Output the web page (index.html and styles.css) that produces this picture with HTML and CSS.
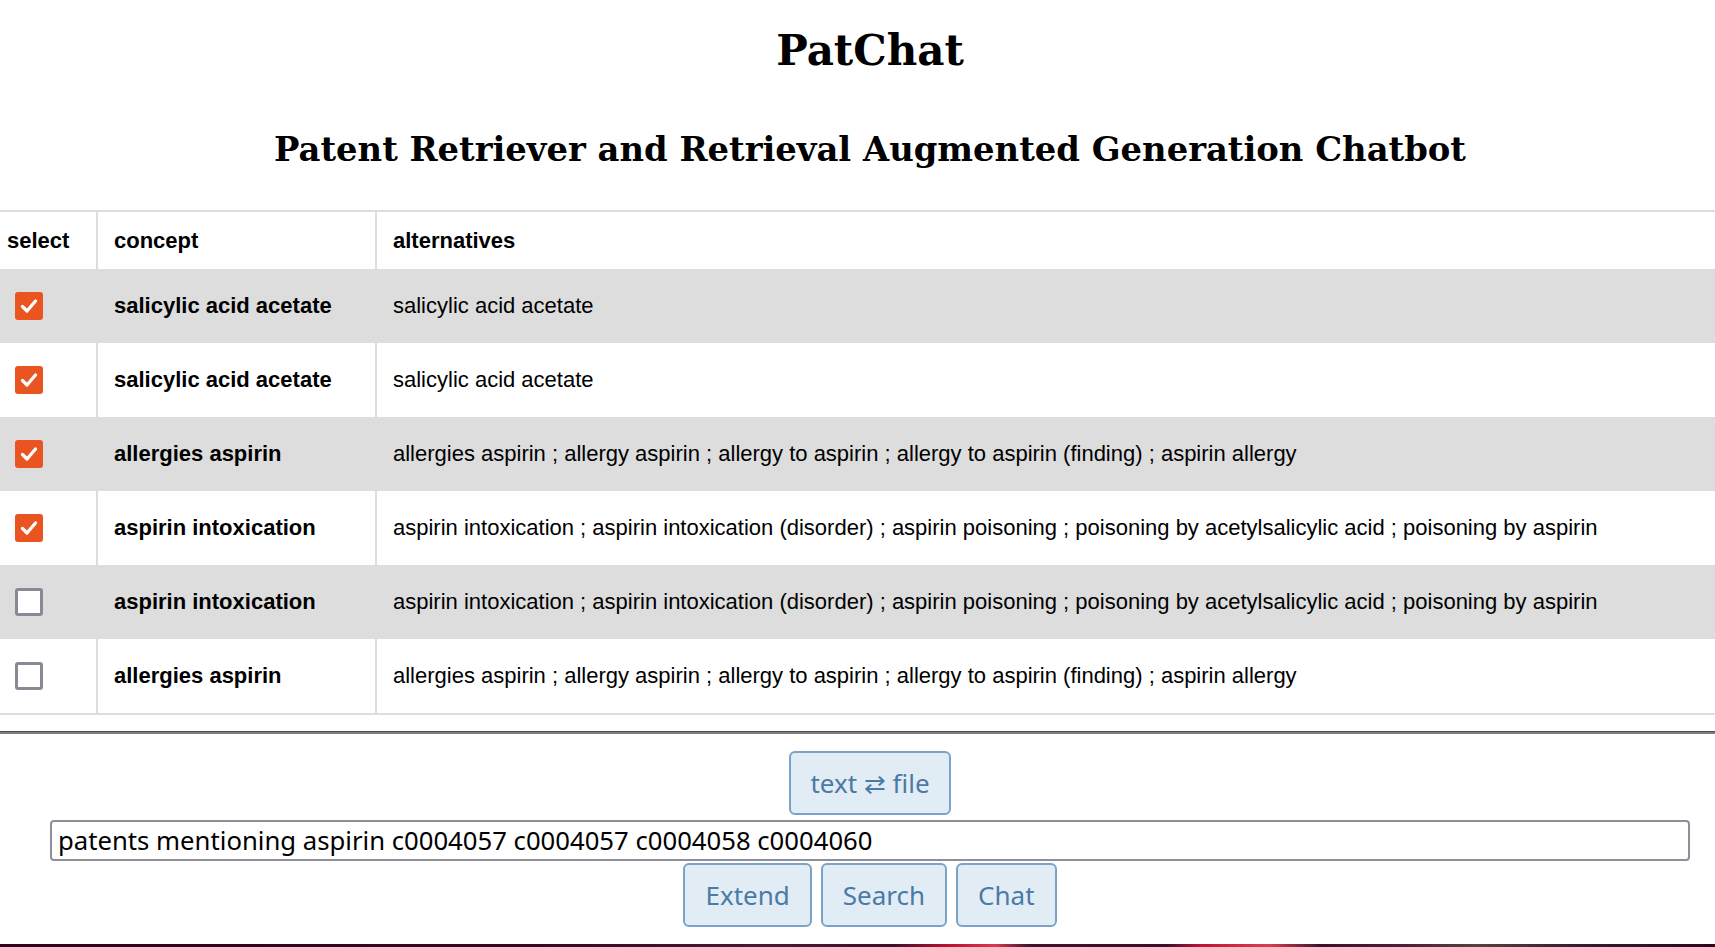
FILE: index.html
```html
<!DOCTYPE html>
<html lang="en">
<head>
<meta charset="utf-8">
<title>PatChat</title>
<link rel="stylesheet" href="styles.css">
</head>
<body>
<div class="page">
  <header class="masthead">
    <h1 class="title">PatChat</h1>
    <h2 class="subtitle">Patent Retriever and Retrieval Augmented Generation Chatbot</h2>
  </header>

  <table class="concepts">
    <colgroup>
      <col class="c-select">
      <col class="c-concept">
      <col class="c-alt">
    </colgroup>
    <thead>
      <tr><th class="sel">select</th><th>concept</th><th>alternatives</th></tr>
    </thead>
    <tbody>
      <tr class="odd">
        <td class="sel"><span class="box on"><svg viewBox="0 0 28 28" width="28" height="28"><path d="M7.5 14.5 L12 19 L20.5 9" fill="none" stroke="#fff" stroke-width="3.3" stroke-linecap="round" stroke-linejoin="round"/></svg></span></td>
        <td class="concept">salicylic acid acetate</td>
        <td>salicylic acid acetate</td>
      </tr>
      <tr>
        <td class="sel"><span class="box on"><svg viewBox="0 0 28 28" width="28" height="28"><path d="M7.5 14.5 L12 19 L20.5 9" fill="none" stroke="#fff" stroke-width="3.3" stroke-linecap="round" stroke-linejoin="round"/></svg></span></td>
        <td class="concept">salicylic acid acetate</td>
        <td>salicylic acid acetate</td>
      </tr>
      <tr class="odd">
        <td class="sel"><span class="box on"><svg viewBox="0 0 28 28" width="28" height="28"><path d="M7.5 14.5 L12 19 L20.5 9" fill="none" stroke="#fff" stroke-width="3.3" stroke-linecap="round" stroke-linejoin="round"/></svg></span></td>
        <td class="concept">allergies aspirin</td>
        <td>allergies aspirin ; allergy aspirin ; allergy to aspirin ; allergy to aspirin (finding) ; aspirin allergy</td>
      </tr>
      <tr>
        <td class="sel"><span class="box on"><svg viewBox="0 0 28 28" width="28" height="28"><path d="M7.5 14.5 L12 19 L20.5 9" fill="none" stroke="#fff" stroke-width="3.3" stroke-linecap="round" stroke-linejoin="round"/></svg></span></td>
        <td class="concept">aspirin intoxication</td>
        <td>aspirin intoxication ; aspirin intoxication (disorder) ; aspirin poisoning ; poisoning by acetylsalicylic acid ; poisoning by aspirin</td>
      </tr>
      <tr class="odd">
        <td class="sel"><span class="box off"></span></td>
        <td class="concept">aspirin intoxication</td>
        <td>aspirin intoxication ; aspirin intoxication (disorder) ; aspirin poisoning ; poisoning by acetylsalicylic acid ; poisoning by aspirin</td>
      </tr>
      <tr>
        <td class="sel"><span class="box off"></span></td>
        <td class="concept">allergies aspirin</td>
        <td>allergies aspirin ; allergy aspirin ; allergy to aspirin ; allergy to aspirin (finding) ; aspirin allergy</td>
      </tr>
    </tbody>
  </table>

  <div class="rule"></div>

  <form class="query">
    <button type="button" class="btn toggle">text ⇄ file</button>
    <input class="qinput" type="text" value="patents mentioning aspirin c0004057 c0004057 c0004058 c0004060">
    <div class="actions">
      <button type="button" class="btn">Extend</button>
      <button type="button" class="btn">Search</button>
      <button type="button" class="btn">Chat</button>
    </div>
  </form>
</div>
<div class="desktop-strip"></div>
</body>
</html>
```

FILE: styles.css
```css
html, body {
  margin: 0;
  padding: 0;
  background: #ffffff;
}

body {
  min-height: 100vh;
  display: flex;
  flex-direction: column;
  font-family: "Liberation Sans", Arial, sans-serif;
  color: #000;
}

.page {
  flex: 1 0 auto;
}

.masthead {
  padding-left: 25px;
  text-align: center;
}

.title {
  margin: 0;
  padding-top: 20px;
  font-family: "DejaVu Serif", serif;
  font-weight: bold;
  font-size: 42px;
  line-height: 62px;
}

.subtitle {
  margin: 0;
  padding-top: 45px;
  font-family: "DejaVu Serif", serif;
  font-weight: bold;
  font-size: 33.8px;
  line-height: 44px;
}

.concepts {
  margin-top: 39px;
  width: 100%;
  border-collapse: collapse;
  table-layout: fixed;
  font-size: 22px;
  border-top: 2px solid #dddddd;
  border-bottom: 2px solid #dddddd;
}

.c-select { width: 97px; }
.c-concept { width: 279px; }

.concepts th,
.concepts td {
  text-align: left;
  padding: 0 16px;
  border-left: 2px solid #dddddd;
  vertical-align: middle;
}

.concepts th:first-child,
.concepts td:first-child {
  border-left: none;
}

.concepts th {
  height: 57px;
  font-weight: bold;
}

.concepts th.sel {
  padding-left: 7px;
}

.concepts td {
  height: 74px;
  white-space: nowrap;
}

.concepts td.sel {
  padding-left: 15px;
}

.concepts tr.odd td {
  background: #dddddd;
}

.concepts td.concept {
  font-weight: bold;
}

.box {
  display: block;
  width: 28px;
  height: 28px;
  box-sizing: border-box;
  border-radius: 3px;
}

.box svg {
  display: block;
}

.box.on {
  background: #e95420;
}

.box.off {
  background: #ffffff;
  border: 3px solid #8a8894;
}

.rule {
  margin-top: 16px;
  height: 0;
  border-top: 1px solid #4f4f4f;
  border-bottom: 2px solid #7e7e7e;
}

.query {
  padding-left: 25px;
  padding-top: 17px;
  display: flex;
  flex-direction: column;
  align-items: center;
  font-family: "Noto Sans", sans-serif;
}

.btn {
  font-family: "Noto Sans", sans-serif;
  font-size: 26px;
  color: #4a7aa6;
  background: #e2ecf5;
  border: 2px solid #7ba3c7;
  border-radius: 6px;
  padding: 0 20px;
  height: 64px;
  cursor: pointer;
}

.toggle {
  width: 162px;
  padding: 0;
}

.qinput {
  margin-top: 5px;
  align-self: stretch;
  margin-right: 25px;
  margin-left: 25px;
  height: 41px;
  box-sizing: border-box;
  border: 2px solid #908e99;
  border-radius: 4px;
  padding: 0 6px;
  font-family: "Noto Sans", sans-serif;
  font-size: 25.7px;
  color: #000;
  background: #fff;
}

.actions {
  margin-top: 2px;
  display: flex;
  gap: 9px;
}

.desktop-strip {
  flex: 0 0 3px;
  background: linear-gradient(90deg, #2c0620 0%, #300a24 30%, #3a0f2b 36%, #4a1a35 45%, #3c1030 52%, #b01030 55%, #d83a50 58%, #3f1432 60%, #3a0f2b 68%, #c01436 70%, #d84050 74%, #3a1230 77%, #4b2038 82%, #5a4040 86%, #3a1a30 92%, #2c0820 100%);
}
```
